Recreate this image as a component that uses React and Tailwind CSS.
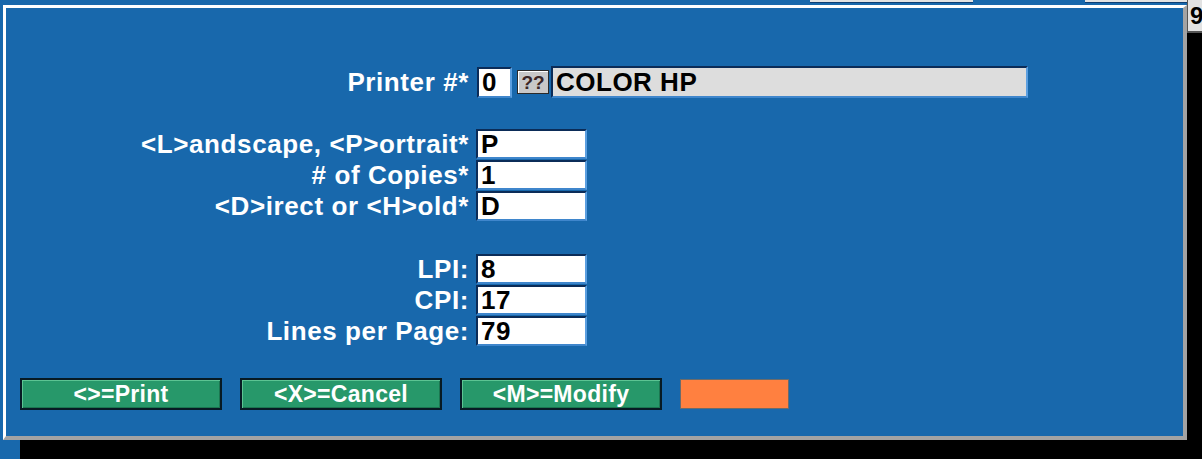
import React from "react";

const BLUE = "bg-[#1868ac]";

const Field = ({ value, width = "w-[111px]", height = "h-[30px]" }) => (
  <div
    className={`${width} ${height} flex items-center bg-white border-t-2 border-l-2 border-t-[#0b2c58] border-l-[#0b2c58] border-r-2 border-b-2 border-r-[#5b9fe0] border-b-[#3f86cc] pl-[3px] text-[26px] font-bold tracking-[0.5px] text-black leading-none`}
  >
    {value}
  </div>
);

const Row = ({ label, value }) => (
  <div className="flex h-[30px] items-center">
    <div className="w-[464px] pr-[1px] text-right text-[26px] font-bold tracking-[0.6px] text-white leading-[30px]">
      {label}
    </div>
    <div className="ml-[6px]">
      <Field value={value} />
    </div>
  </div>
);

const ActionButton = ({ children }) => (
  <button className="w-[202px] h-[32px] border-2 border-[#071a24] bg-[#27986a] shadow-[inset_1px_1px_0_#5cc493,inset_-1px_-1px_0_#1b7650] text-white text-[23px] font-bold leading-none tracking-[0.3px]">
    {children}
  </button>
);

export default function App() {
  return (
    <div
      className="w-[1202px] h-[459px] flex flex-col bg-black overflow-hidden"
      style={{ fontFamily: '"Liberation Sans", Arial, sans-serif' }}
    >
      <div className="flex h-[440px]">
        {/* desktop area behind the dialog */}
        <div className={`w-[1187px] h-[440px] ${BLUE} flex flex-col`}>
          <div className="flex h-[5px]">
            <div className="ml-[810px] w-[163px] h-[3px] bg-[#e2e2e2] border-b border-[#0f3f73]" />
            <div className="ml-[112px] w-[102px] h-[3px] bg-[#e2e2e2] border-b border-[#0f3f73]" />
          </div>
          <div className="flex pl-[3px]">
            {/* dialog */}
            <div className={`w-[1184px] h-[435px] ${BLUE} border-t-[3px] border-l-[3px] border-white border-r-[4px] border-b-[4px] border-r-[#a3a3a3] border-b-[#a3a3a3] flex flex-col pt-[58px]`}>
              {/* printer row */}
              <div className="flex h-[32px] items-center">
                <div className="w-[464px] pr-[1px] text-right text-[26px] font-bold tracking-[0.6px] text-white leading-[30px]">
                  Printer #*
                </div>
                <div className="ml-[7px]">
                  <Field value="0" width="w-[35px]" height="h-[31px]" />
                </div>
                <div className="ml-[5px] w-[32px] h-[24px] flex items-center justify-center bg-[#c8c8c8] border border-[#2a2a2a] shadow-[inset_1px_1px_0_#ffffff] text-[19px] font-bold text-[#3b2626] leading-none">
                  ??
                </div>
                <div className="ml-[2px] w-[477px] h-[32px] flex items-center bg-[#dddddd] border-t-2 border-l-2 border-t-[#0b2c58] border-l-[#0b2c58] border-r-2 border-b-2 border-r-[#5b9fe0] border-b-[#3f86cc] pl-[3px] text-[26px] font-bold tracking-[0.5px] text-black leading-none">
                  COLOR HP
                </div>
              </div>

              <div className="mt-[31px] flex flex-col gap-[1px]">
                <Row label="<L>andscape, <P>ortrait*" value="P" />
                <Row label="# of Copies*" value="1" />
                <Row label="<D>irect or <H>old*" value="D" />
              </div>

              <div className="mt-[33px] flex flex-col gap-[1px]">
                <Row label="LPI:" value="8" />
                <Row label="CPI:" value="17" />
                <Row label="Lines per Page:" value="79" />
              </div>

              <div className="mt-[32px] pl-[14px] flex items-center gap-[18px]">
                <ActionButton>{"<>=Print"}</ActionButton>
                <ActionButton>{"<X>=Cancel"}</ActionButton>
                <ActionButton>{"<M>=Modify"}</ActionButton>
                <div className="w-[109px] h-[30px] bg-[#ff8040] border border-[#6b6b6b]" />
              </div>
            </div>
          </div>
        </div>
        {/* right edge */}
        <div className="flex-1 flex flex-col">
          <div className="h-[33px] bg-[#e2e2e2] border-b-2 border-l border-[#555555] flex items-center pl-[2px] text-[24px] font-bold text-black leading-none">
            9
          </div>
        </div>
      </div>
      <div className="flex h-[19px]">
        <div className={`w-[20px] ${BLUE}`} />
      </div>
    </div>
  );
}
